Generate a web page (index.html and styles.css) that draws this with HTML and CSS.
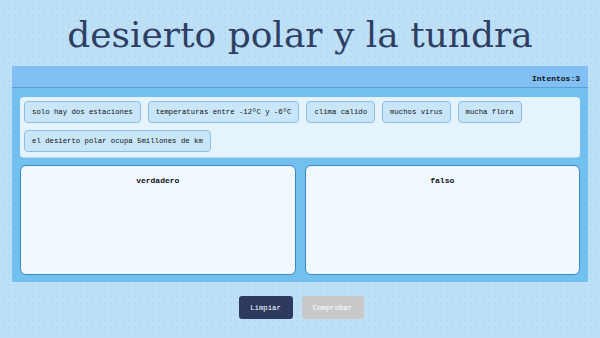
FILE: index.html
```html
<!DOCTYPE html>
<html lang="es">
<head>
    <meta charset="UTF-8">
    <meta name="viewport" content="width=device-width, initial-scale=1.0">
    <title>desierto polar y la tundra</title>
    <link rel="stylesheet" href="styles.css">
</head>
<body>
    <h1 class="titulo">desierto polar y la tundra</h1>

    <div class="juego">
        <div class="cabecera">
            <span class="intentos">Intentos:3</span>
        </div>

        <div class="opciones">
            <div class="ficha">solo hay dos estaciones</div>
            <div class="ficha">temperaturas entre -12ºC y -6ºC</div>
            <div class="ficha">clima calido</div>
            <div class="ficha">muchos virus</div>
            <div class="ficha">mucha flora</div>
            <div class="ficha">el desierto polar ocupa 5millones de km</div>
        </div>

        <div class="zonas">
            <div class="zona">verdadero</div>
            <div class="zona">falso</div>
        </div>
    </div>

    <div class="acciones">
        <button class="boton limpiar">Limpiar</button>
        <button class="boton comprobar">Comprobar</button>
    </div>
</body>
</html>
```

FILE: styles.css
```css
body{
    margin: 0;
    height: 338px;
    background-color: #bde0f7;
    background-image:
        radial-gradient(circle, rgba(150, 200, 235, 0.25) 1px, transparent 1.5px);
    background-size: 6px 6px;
    font-family: "Liberation Mono", "DejaVu Sans Mono", monospace;
    overflow: hidden;
}

.titulo{
    margin: 0;
    height: 66px;
    line-height: 70px;
    text-align: center;
    font-family: "DejaVu Serif", serif;
    font-weight: normal;
    font-size: 36px;
    color: #2f3f63;
}

.juego{
    margin: 0 12px;
    padding: 0 8px 7px;
    background: #72c0f0;
}

.cabecera{
    height: 21px;
    margin: 0 -8px 9px;
    padding: 0 8px;
    background: #82bff3;
    display: flex;
    align-items: flex-end;
    border-bottom: 1px solid #5a9fd4;
}

.intentos{
    margin-left: auto;
    padding: 0 0 4px;
    font-size: 8px;
    font-weight: bold;
    color: #111;
}

.opciones{
    display: flex;
    flex-wrap: wrap;
    gap: 6px 7px;
    padding: 4px;
    min-height: 52px;
    background: #e4f3fc;
    border-radius: 4px;
    border-bottom: 1px dotted #8fc6ea;
}

.ficha{
    height: 20px;
    line-height: 20px;
    padding: 0 7px;
    font-size: 7.3px;
    color: #111;
    background: #c9e6f8;
    border: 1px solid #8ebfe0;
    border-radius: 4px;
}

.zonas{
    display: flex;
    gap: 9px;
    margin-top: 7px;
}

.zona{
    flex: 1;
    height: 98px;
    padding-top: 10px;
    text-align: center;
    font-size: 8px;
    font-weight: bold;
    color: #111;
    background: #f0f8ff;
    border: 1px solid #3f86c0;
    border-radius: 6px;
}

.acciones{
    display: flex;
    justify-content: center;
    gap: 9px;
    padding-top: 14px;
    margin-left: 2px;
}

.boton{
    height: 23px;
    border: none;
    border-radius: 3px;
    font-family: "Liberation Mono", monospace;
    font-size: 7.3px;
    color: #fff;
}

.limpiar{
    width: 54px;
    background: #2d3a5f;
}

.comprobar{
    width: 62px;
    background: #c9c9c9;
}
```
